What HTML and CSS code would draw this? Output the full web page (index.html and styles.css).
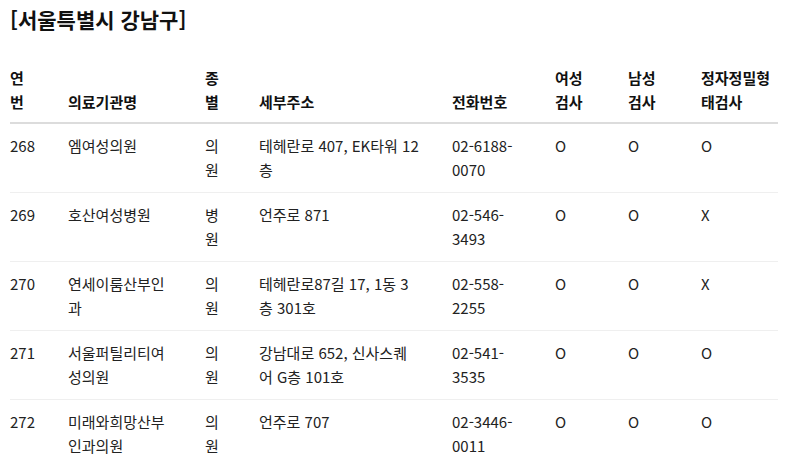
FILE: index.html
```html
<!DOCTYPE html>
<html lang="ko">
<head>
<meta charset="utf-8">
<link rel="stylesheet" href="styles.css">
</head>
<body>
<main class="page">
  <h2 class="title">[서울특별시 강남구]</h2>
  <table class="clinics">
    <colgroup>
      <col class="w-no"><col class="w-name"><col class="w-type"><col class="w-addr"><col class="w-tel"><col class="w-f"><col class="w-m"><col class="w-s">
    </colgroup>
    <thead>
      <tr>
        <th>연번</th><th>의료기관명</th><th>종별</th><th>세부주소</th><th>전화번호</th><th>여성검사</th><th>남성검사</th><th>정자정밀형태검사</th>
      </tr>
    </thead>
    <tbody>
      <tr><td>268</td><td>엠여성의원</td><td>의원</td><td>테헤란로 407, EK타워 12 층</td><td>02-6188-0070</td><td>O</td><td>O</td><td>O</td></tr>
      <tr><td>269</td><td>호산여성병원</td><td>병원</td><td>언주로 871</td><td>02-546-3493</td><td>O</td><td>O</td><td>X</td></tr>
      <tr><td>270</td><td>연세이룸산부인과</td><td>의원</td><td>테헤란로87길 17, 1동 3층 301호</td><td>02-558-2255</td><td>O</td><td>O</td><td>X</td></tr>
      <tr><td>271</td><td>서울퍼틸리티여성의원</td><td>의원</td><td>강남대로 652, 신사스퀘어 G층 101호</td><td>02-541-3535</td><td>O</td><td>O</td><td>O</td></tr>
      <tr><td>272</td><td>미래와희망산부인과의원</td><td>의원</td><td>언주로 707</td><td>02-3446-0011</td><td>O</td><td>O</td><td>O</td></tr>
    </tbody>
  </table>
</main>
</body>
</html>
```
FILE: styles.css
```css
html, body {
  margin: 0;
  padding: 0;
  background: #fff;
}
body {
  font-family: "Noto Sans CJK KR", "Noto Sans", sans-serif;
  font-size: 15px;
  line-height: 24px;
  color: #222;
}
.page {
  padding: 4px 10px 0 10px;
}
.title {
  margin: 0 0 22px 0;
  font-size: 21px;
  line-height: 30px;
  font-weight: 700;
  color: #111;
}
.clinics {
  width: 768px;
  table-layout: fixed;
  border-collapse: collapse;
}
.w-no { width: 58px; }
.w-name { width: 137px; }
.w-type { width: 54px; }
.w-addr { width: 193px; }
.w-tel { width: 103px; }
.w-f { width: 73px; }
.w-m { width: 73px; }
.w-s { width: 77px; }

.clinics th,
.clinics td {
  box-sizing: border-box;
  text-align: left;
  padding: 10px 33px 10px 0;
}
.clinics th {
  vertical-align: bottom;
  font-weight: 700;
  color: #111;
  padding-bottom: 8px;
  border-bottom: 2px solid #dcdcdc;
}
.clinics td {
  vertical-align: top;
  border-top: 1px solid #efefef;
}
.clinics tbody tr:first-child td {
  border-top: 0;
}
.clinics th:nth-child(2), .clinics td:nth-child(2) { padding-right: 34px; }
.clinics th:nth-child(3), .clinics td:nth-child(3) { padding-right: 34px; }
.clinics th:nth-child(4), .clinics td:nth-child(4) { padding-right: 32px; }
.clinics th:nth-child(5), .clinics td:nth-child(5) { padding-right: 30px; }
.clinics th:nth-child(6), .clinics td:nth-child(6),
.clinics th:nth-child(7), .clinics td:nth-child(7) { padding-right: 38px; }
.clinics th:nth-child(8), .clinics td:nth-child(8) { padding-right: 0; }
```
